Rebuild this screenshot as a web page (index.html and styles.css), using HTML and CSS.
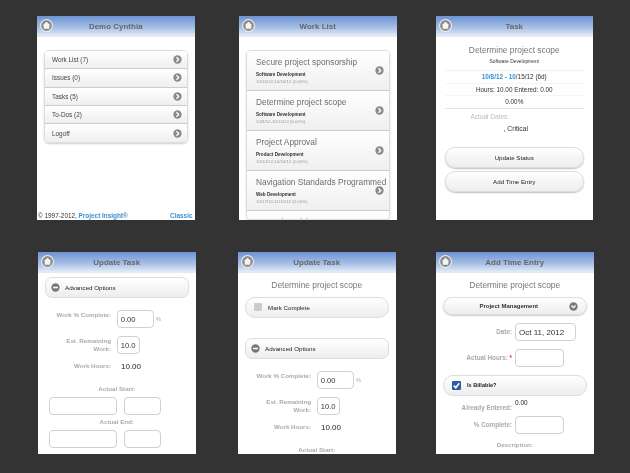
FILE: index.html
```html
<!DOCTYPE html>
<html lang="en">
<head>
<meta charset="utf-8">
<title>Project Insight Mobile</title>
<link rel="stylesheet" href="styles.css">
</head>
<body>
<svg class="defs" width="0" height="0" aria-hidden="true">
  <symbol id="home" viewBox="0 0 14 14">
    <circle cx="7" cy="7" r="7" fill="#eee"/>
    <circle cx="7" cy="7" r="5.8" fill="#8c8c8c"/>
    <path d="M7 3 L11 6.8 H10 V10.5 H4 V6.8 H3 Z" fill="#f4f4f4"/>
  </symbol>
  <symbol id="arrow" viewBox="0 0 10 10">
    <circle cx="5" cy="5" r="4.6" fill="#8a8a8a"/>
    <path d="M3.9 2.6 L6.3 5 L3.9 7.4" fill="none" stroke="#fff" stroke-width="1.5"/>
  </symbol>
  <symbol id="minus" viewBox="0 0 10 10">
    <circle cx="5" cy="5" r="4.6" fill="#777"/>
    <rect x="2.3" y="4.1" width="5.4" height="1.8" fill="#fff"/>
  </symbol>
  <symbol id="down" viewBox="0 0 10 10">
    <circle cx="5" cy="5" r="4.6" fill="#777"/>
    <path d="M2.7 4 L5 6.3 L7.3 4" fill="none" stroke="#fff" stroke-width="1.5"/>
  </symbol>
</svg>

<section class="phone p1">
  <header class="bar"><svg class="home"><use href="#home"/></svg><h1>Demo Cynthia</h1></header>
  <div class="body menu-body">
    <ul class="list">
      <li class="row"><span>Work List (7)</span><svg class="ico"><use href="#arrow"/></svg></li>
      <li class="row"><span>Issues (0)</span><svg class="ico"><use href="#arrow"/></svg></li>
      <li class="row"><span>Tasks (5)</span><svg class="ico"><use href="#arrow"/></svg></li>
      <li class="row"><span>To-Dos (2)</span><svg class="ico"><use href="#arrow"/></svg></li>
      <li class="row"><span>Logoff</span><svg class="ico"><use href="#arrow"/></svg></li>
    </ul>
    <footer class="foot"><span>© 1997-2012, <a>Project Insight®</a></span><a>Classic</a></footer>
  </div>
</section>

<section class="phone p2">
  <header class="bar"><svg class="home"><use href="#home"/></svg><h1>Work List</h1></header>
  <div class="body list-body">
    <ul class="list tall">
      <li class="row"><div class="cell"><h2>Secure project sponsorship</h2><b>Software Development</b><small>10/16/12-10/16/12 (0.00%)</small></div><svg class="ico"><use href="#arrow"/></svg></li>
      <li class="row"><div class="cell"><h2>Determine project scope</h2><b>Software Development</b><small>10/8/12-10/15/12 (0.00%)</small></div><svg class="ico"><use href="#arrow"/></svg></li>
      <li class="row"><div class="cell"><h2>Project Approval</h2><b>Product Development</b><small>10/10/12-10/10/12 (0.00%)</small></div><svg class="ico"><use href="#arrow"/></svg></li>
      <li class="row"><div class="cell"><h2>Navigation Standards Programmed</h2><b>Web Development</b><small>10/17/12-11/15/12 (0.00%)</small></div><svg class="ico"><use href="#arrow"/></svg></li>
      <li class="row"><div class="cell"><h2>Executive Vision Statement</h2></div></li>
    </ul>
  </div>
</section>

<section class="phone p3">
  <header class="bar"><svg class="home"><use href="#home"/></svg><h1>Task</h1></header>
  <div class="body task-body">
    <h2 class="center">Determine project scope</h2>
    <p class="sub">Software Development</p>
    <p class="line"><a>10/8/12 - 10</a>/15/12 (6d)</p>
    <p class="line">Hours: 10.00 Entered: 0.00</p>
    <p class="line pct">0.00%</p>
    <p class="dates">Actual Dates:</p>
    <p class="crit">, Critical</p>
    <button class="btn">Update Status</button>
    <button class="btn">Add Time Entry</button>
  </div>
</section>

<section class="phone p4">
  <header class="bar"><svg class="home"><use href="#home"/></svg><h1>Update Task</h1></header>
  <div class="body form-body">
    <div class="pill opts"><svg class="ico"><use href="#minus"/></svg><span>Advanced Options</span></div>
    <div class="field first"><label>Work % Complete:</label><span class="box w37">0.00</span><i class="unit">%</i></div>
    <div class="field"><label class="wrap">Est. Remaining Work:</label><span class="box w23">10.0</span></div>
    <div class="field hours"><label>Work Hours:</label><span class="val">10.00</span></div>
    <p class="stack s1">Actual Start:</p>
    <div class="pair"><span class="box w68"></span><span class="box w37"></span></div>
    <p class="stack s2">Actual End:</p>
    <div class="pair"><span class="box w68"></span><span class="box w37"></span></div>
  </div>
</section>

<section class="phone p5">
  <header class="bar"><svg class="home"><use href="#home"/></svg><h1>Update Task</h1></header>
  <div class="body form-body">
    <h2 class="center tight">Determine project scope</h2>
    <div class="pill mark"><span class="check off"></span><span>Mark Complete</span></div>
    <div class="pill opts gap"><svg class="ico"><use href="#minus"/></svg><span>Advanced Options</span></div>
    <div class="field first"><label>Work % Complete:</label><span class="box w37">0.00</span><i class="unit">%</i></div>
    <div class="field"><label class="wrap">Est. Remaining Work:</label><span class="box w23">10.0</span></div>
    <div class="field hours"><label>Work Hours:</label><span class="val">10.00</span></div>
    <p class="stack s1">Actual Start:</p>
  </div>
</section>

<section class="phone p6">
  <header class="bar"><svg class="home"><use href="#home"/></svg><h1>Add Time Entry</h1></header>
  <div class="body form-body">
    <h2 class="center tight">Determine project scope</h2>
    <div class="select"><span>Project Management</span><svg class="ico"><use href="#down"/></svg></div>
    <div class="tf date"><label>Date:</label><span class="box w61">Oct 11, 2012</span></div>
    <div class="tf"><label>Actual Hours: <em>*</em></label><span class="box w49"></span></div>
    <div class="pill bill"><span class="check on"><svg viewBox="0 0 10 10"><path d="M2 5.2 L4.2 7.4 L8 2.6" fill="none" stroke="#fff" stroke-width="1.8"/></svg></span><span>Is Billable?</span></div>
    <div class="tf entered"><label>Already Entered:</label><span class="val small">0.00</span></div>
    <div class="tf pc"><label>% Complete:</label><span class="box w49"></span></div>
    <p class="stack desc">Description:</p>
  </div>
</section>
</body>
</html>
```

FILE: styles.css
```css
* { box-sizing: border-box; }
html, body { margin: 0; padding: 0; }
body {
  width: 630px; height: 473px; background: #333; overflow: hidden;
  position: relative; font-family: "Liberation Sans", Arial, sans-serif; color: #222;
}
.defs { position: absolute; }
h1, h2, p, ul { margin: 0; padding: 0; }
ul { list-style: none; }
a { color: #3b8fd0; font-weight: bold; }

.phone { position: absolute; width: 157.5px; background: #fff; overflow: hidden; display: flex; flex-direction: column; filter: blur(.3px); }
.p1 { left: 37px; top: 16px; height: 204px; }
.p2 { left: 239px; top: 16px; height: 204px; }
.p3 { left: 435.5px; top: 16px; height: 204px; }
.p4 { left: 38px; top: 252px; height: 202px; }
.p5 { left: 238px; top: 252px; height: 202px; }
.p6 { left: 436px; top: 252px; height: 202px; }

.bar {
  height: 21px; flex: none; position: relative; display: flex; align-items: center; justify-content: center;
  background: linear-gradient(#6c93d3, #a9c1e6 60%, #e4ecf7);
  border-bottom: 1px solid #e8e8e8;
}
.bar h1 { font-size: 7.9px; font-weight: bold; color: #666; letter-spacing: .05px; }
.home { position: absolute; left: 3px; top: 3px; width: 13px; height: 13px; }

.body { flex: 1; min-height: 0; display: flex; flex-direction: column; }
.ico { width: 9px; height: 9px; flex: none; }

.list { border: 1px solid #ddd; border-radius: 5px; box-shadow: 0 1px 2px rgba(0,0,0,.2); overflow: hidden; }
.row {
  display: flex; align-items: center; justify-content: space-between;
  background: linear-gradient(#fff, #efefef);
  border-bottom: 1px solid #ccc;
}
.row:last-child { border-bottom: 0; }

.menu-body { padding: 13px 7px 0; }
.menu-body .row { height: 18.3px; padding: 0 5px 0 7px; font-size: 6.4px; color: #444; }
.foot { margin-top: auto; display: flex; justify-content: space-between; font-size: 6.4px; line-height: 8px; margin-inline: -7px; padding: 0 2px 0 1px; color: #333; }

.list-body { padding: 13px 7px 0; }
.tall .row { height: 40px; padding: 0 5px 0 9px; flex: none; }
.cell { display: flex; flex-direction: column; flex: 1; min-width: 0; white-space: nowrap; }
.cell h2 { font-size: 8.35px; font-weight: normal; color: #6e6e6e; line-height: 13px; }
.cell b { font-size: 4.6px; font-weight: bold; color: #333; margin-top: 2px; line-height: 7px; }
.cell small { font-size: 4.35px; color: #999; line-height: 7px; }
.tall .row:last-child { align-items: flex-start; padding-top: 5px; }

.center { font-size: 8.4px; font-weight: normal; color: #777; text-align: center; line-height: 13px; }
.task-body { padding: 7px 9px 0; text-align: center; }
.sub { font-size: 4.9px; color: #333; line-height: 8px; padding: 1px 0 4px; border-bottom: 1px solid #f2f2f2; }
.line { font-size: 6.4px; line-height: 11.5px; color: #333; border-bottom: 1px solid #f5f5f5; }
.line a { font-weight: bold; }
.pct { border-bottom: 1px solid #e6e6e6; }
.dates { font-size: 6.5px; color: #bbb; text-align: left; padding: 3px 0 0 26px; line-height: 9px; }
.crit { font-size: 6.8px; line-height: 10px; margin-top: 3px; padding-left: 3px; color: #333; }
.btn {
  height: 21px; border: 1px solid #ddd; border-radius: 10px; margin-top: 3px; font: 6.2px "Liberation Sans", Arial, sans-serif; color: #222;
  background: linear-gradient(#fff, #ededed); box-shadow: 0 1px 1.5px rgba(0,0,0,.25); flex: none;
}
.crit + .btn { margin-top: 13px; }

.form-body { padding: 4px 7px 0; }
.pill { height: 20.5px; flex: none; display: flex; align-items: center; gap: 5px; border: 1px solid #ddd; border-radius: 7px; background: linear-gradient(#fff, #ededed); font-size: 6.2px; color: #222; }
.opts { padding-left: 5px; }
.opts.gap { margin-top: 20.5px; }
.mark { border-radius: 10px; padding-left: 8px; margin-top: 5px; gap: 6px; }
.tight { margin-top: 2px; }
.p6 .tight { margin-top: 1.5px; }
.check { width: 8px; height: 8px; flex: none; border-radius: 1px; }
.check.off { background: #ccc; }
.check.on { background: #2b5f9e; display: block; }
.check.on svg { display: block; width: 8px; height: 8px; }

.field { display: flex; align-items: center; height: 18px; margin-top: 8px; }
.field.first { margin-top: 12.5px; }
.field label { width: 66px; flex: none; font-size: 6.2px; font-weight: bold; color: #aaa; text-align: right; line-height: 8px; }
.field.first label { margin-bottom: 8px; }
.field label.wrap { padding-left: 18px; }
.field .box { margin-left: 5.7px; }
.unit { font-style: normal; font-size: 6px; color: #aaa; margin-left: 2px; }
.box { display: flex; align-items: center; height: 18px; flex: none; padding-left: 3px; border: 1.5px solid #d0d0d0; border-radius: 4px; font-size: 7.6px; color: #333; }
.w23 { width: 23px; }
.w37 { width: 37px; }
.w49 { width: 49px; }
.w61 { width: 61px; }
.w68 { width: 68px; }
.val { font-size: 8px; color: #222; margin-left: 10px; }
.hours { margin-top: 5px; height: 14px; }
.stack { text-align: center; font-size: 6.2px; font-weight: bold; color: #aaa; line-height: 8px; }
.s1 { margin-top: 12px; }
.s2 { margin-top: 3px; }
.pair { display: flex; gap: 7px; margin-top: 4px; padding-left: 4px; }

.select { height: 18px; flex: none; display: flex; align-items: center; justify-content: center; position: relative; border: 1px solid #ddd; border-radius: 10px; margin-top: 5.5px; background: linear-gradient(#fff, #ededed); box-shadow: 0 1px 1.5px rgba(0,0,0,.2); font-size: 6px; font-weight: bold; color: #333; }
.select span { padding-right: 12px; }
.select .ico { position: absolute; right: 8px; top: 4px; }
.tf { display: flex; align-items: center; height: 18px; margin-top: 8px; }
.tf label { width: 69px; flex: none; font-size: 6.3px; font-weight: bold; color: #aaa; text-align: right; line-height: 8px; }
.tf em { color: #d33; font-style: normal; }
.tf .box { margin-left: 3px; }
.date .box { font-size: 8px; }
.bill { margin-top: 8px; border-radius: 10px; padding-left: 8px; gap: 6px; font-size: 5.6px; font-weight: bold; }
.bill .check { width: 9px; height: 9px; }
.bill .check svg { width: 9px; height: 9px; }
.tf.entered { height: 14px; margin-top: 2px; align-items: flex-start; }
.entered label { align-self: flex-end; }
.small { font-size: 6.5px; margin-left: 3px; margin-top: 1px; line-height: 8px; }
.tf.pc { margin-top: 4px; }
.desc { margin-top: 7px; }
```
